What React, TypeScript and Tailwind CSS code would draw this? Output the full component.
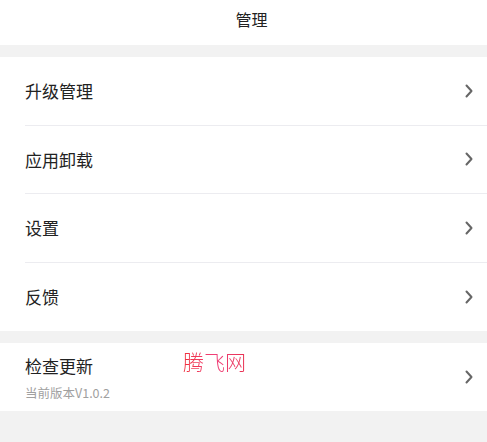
import React from 'react';

const rows = ['升级管理', '应用卸载', '设置', '反馈'];

const Chevron = () => (
  <svg width="10" height="16" viewBox="0 0 10 16" className="shrink-0">
    <path d="M2.5 2.5 L7.5 8 L2.5 13.5" fill="none" stroke="#666" strokeWidth="2" strokeLinecap="round" strokeLinejoin="round" />
  </svg>
);

export default function App() {
  return (
    <div
      className="w-[487px] h-[442px] bg-[#f2f2f2] overflow-hidden"
      style={{ fontFamily: '"Noto Sans CJK SC", "Noto Sans", sans-serif' }}
    >
      {/* Header */}
      <div className="h-[45px] bg-white flex items-center justify-center pb-[8px] pl-[16px]">
        <span className="text-[16px] text-[#222]">管理</span>
      </div>

      {/* Menu list */}
      <div className="mt-[12px] bg-white">
        {rows.map((label, i) => (
          <div key={label} className="pl-[25px]">
            <div
              className={`h-[68.5px] flex items-center justify-between pr-[13px] ${
                i < rows.length - 1 ? 'border-b border-[#ececf0]' : ''
              }`}
            >
              <span className="text-[17px] text-[#222] leading-none">{label}</span>
              <Chevron />
            </div>
          </div>
        ))}
      </div>

      {/* Check update */}
      <div className="relative mt-[12px] bg-white h-[68px] pl-[25px] pr-[13px] flex items-center justify-between">
        <div className="flex flex-col pt-[2px]">
          <span className="text-[17px] text-[#222] leading-none">检查更新</span>
          <span className="text-[12.5px] text-[#a0a0a0] leading-none mt-[13px]" style={{ fontFamily: '"Noto Sans CJK SC", Roboto, sans-serif' }}>
            当前版本V1.0.2
          </span>
        </div>
        <Chevron />
        <span className="absolute left-[183px] top-[8px] text-[21px] leading-none font-light bg-gradient-to-r from-[#f0303a] via-[#f0407a] to-[#e83050] bg-clip-text text-transparent">
          腾飞网
        </span>
      </div>
    </div>
  );
}
